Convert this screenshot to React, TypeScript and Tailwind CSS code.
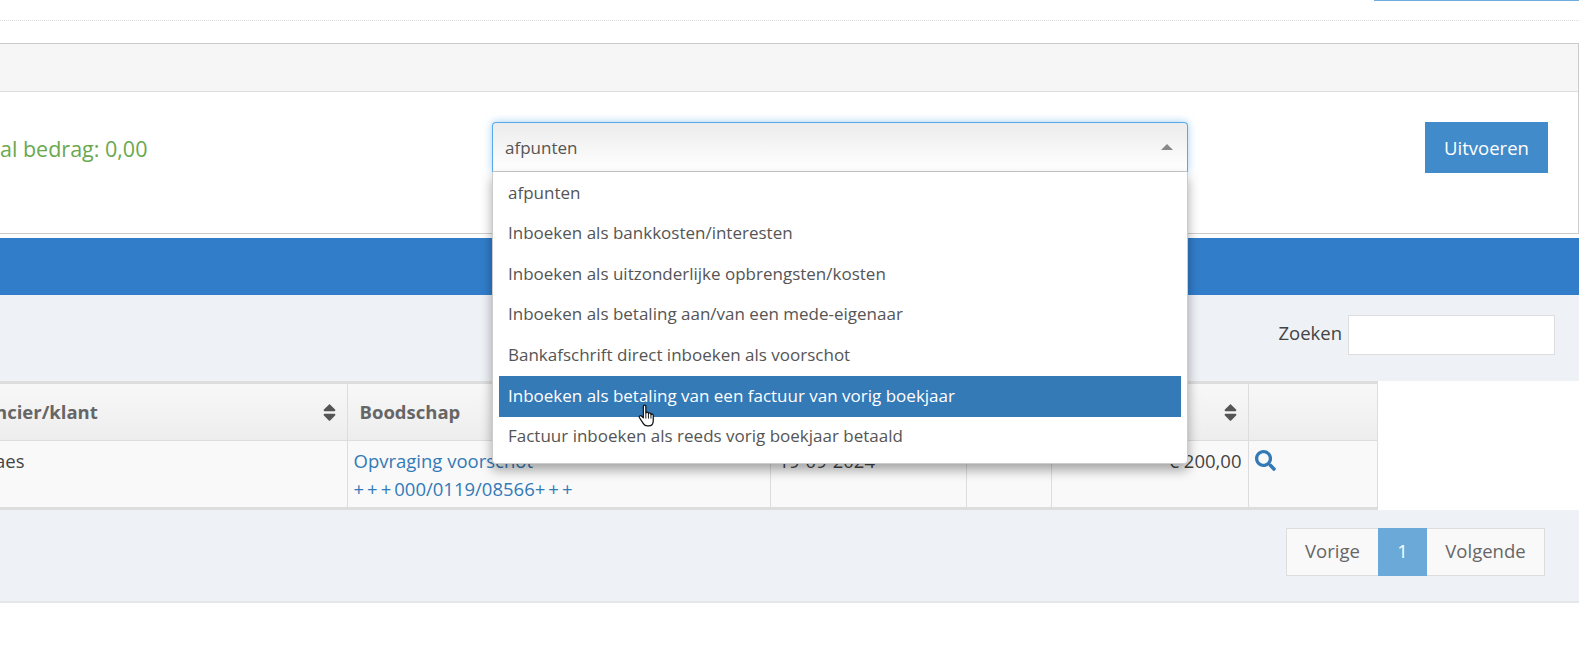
import React from 'react';
import { FaSort, FaSearch } from 'react-icons/fa';

// Dropdown options of the bank statement action select
const options = [
  'afpunten',
  'Inboeken als bankkosten/interesten',
  'Inboeken als uitzonderlijke opbrengsten/kosten',
  'Inboeken als betaling aan/van een mede-eigenaar',
  'Bankafschrift direct inboeken als voorschot',
  'Inboeken als betaling van een factuur van vorig boekjaar',
  'Factuur inboeken als reeds vorig boekjaar betaald',
];

function HandCursor() {
  return (
    <svg width="18" height="25" viewBox="0 0 17 24" className="absolute left-[139px] top-[28px]">
      <path
        d="M5 2.2c0-1.6 2.4-1.6 2.4 0v6.6c.2-1.4 2.4-1.4 2.5 0v.6c.2-1.3 2.3-1.3 2.4 0v.9c.3-1 2.2-.9 2.2.4v5.3c0 2.8-1.6 5-4.6 5H8.8c-1.8 0-2.9-.8-3.8-2.2L1.3 13.200c-.9-1.500 1-2.700 2.100-1.500L5 13.300V2.200z"
        fill="#fff"
        stroke="#111"
        strokeWidth="1.2"
        strokeLinejoin="round"
      />
      <path d="M7.400 9v5M9.900 9.500V14M12.300 10.300V14" stroke="#111" strokeWidth="0.9" fill="none" />
    </svg>
  );
}

function ActionSelect() {
  return (
    <div className="relative h-[50px] w-[696px]">
      <div className="flex h-[50px] items-center justify-between rounded-t-[4px] border border-[#5aa9e6] border-b-[#c8c8c8] bg-gradient-to-b from-[#ececec] to-[#ffffff] pl-[12px] pr-[14px] shadow-[0_0_8px_rgba(102,175,233,0.6)]">
        <span className="pt-[2px] text-[17px] text-[#555]">afpunten</span>
        <span className="h-0 w-0 border-x-[6px] border-b-[6px] border-x-transparent border-b-[#888]"></span>
      </div>
      <ul className="absolute left-0 top-[50px] z-20 w-[696px] rounded-b-[4px] border-x border-b border-[#ccc] bg-white px-[6px] pb-[6px] pt-px shadow-[0_6px_12px_rgba(0,0,0,0.35)]">
        {options.map((o, i) => (
          <li
            key={o}
            className={`relative flex h-[40.600px] items-center pb-[2px] pl-[9px] text-[17px] ${
              i === 5 ? 'bg-[#337ab7] text-white' : 'text-[#555]'
            }`}
          >
            {o}
            {i === 5 && <HandCursor />}
          </li>
        ))}
      </ul>
    </div>
  );
}

function SortHead({ label }: { label?: string }) {
  return (
    <div className="flex items-center justify-between pr-[7px]">
      <span>{label}</span>
      <FaSort className="text-[21px] text-[#555]" />
    </div>
  );
}

export default function App() {
  return (
    <div className="h-[650px] w-[1591px] overflow-hidden bg-white font-['Open_Sans',sans-serif] text-[18.500px] text-[#444]">
      <div className="w-[1579px]">
        {/* Top strip */}
        <div className="h-[21px] border-b border-dotted border-[#ddd]">
          <div className="ml-auto h-px w-[205px] bg-[#6cacde]"></div>
        </div>

        {/* Action panel */}
        <div className="mt-[22px] border border-l-0 border-[#ccc]">
          <div className="h-[48px] border-b border-[#ddd] bg-[#f6f6f6]"></div>
          <div className="flex h-[141px] items-start pt-[30px]">
            <div className="flex h-[54px] w-[492px] items-center text-[21.500px] text-[#6aa84f]">al bedrag: 0,00</div>
            <ActionSelect />
            <button className="ml-auto mr-[30px] h-[51px] w-[123px] bg-[#428bca] pt-[1px] text-[18.500px] text-white">Uitvoeren</button>
          </div>
        </div>

        {/* Blue title bar */}
        <div className="mt-[4px] h-[57px] bg-[#317dca]"></div>

        {/* Search row */}
        <div className="flex h-[86px] items-start justify-end gap-[6px] bg-[#eef1f6] pr-[24px] pt-[20px]">
          <label className="leading-[35px] text-[#444]">Zoeken</label>
          <input className="h-[40px] w-[207px] border border-[#ddd] bg-white" />
        </div>

        {/* Table */}
        <table className="w-[1377px] table-fixed border-collapse border-y-[3px] border-[#ddd]">
          <colgroup>
            <col className="w-[347px]" />
            <col className="w-[423px]" />
            <col className="w-[196px]" />
            <col className="w-[85px]" />
            <col className="w-[197px]" />
            <col className="w-[129px]" />
          </colgroup>
          <thead>
            <tr className="h-[58px] bg-gradient-to-b from-[#f8f8f8] to-[#ededed] text-left font-bold text-[#666]">
              <th className="border-r border-b border-[#ddd] pl-0">
                <div className="-ml-[5px]">
                  <SortHead label="ncier/klant" />
                </div>
              </th>
              <th className="border-x border-b border-[#ddd] pl-[12px]">Boodschap</th>
              <th className="border-x border-b border-[#ddd]"></th>
              <th className="border-x border-b border-[#ddd]"></th>
              <th className="border-x border-b border-[#ddd]">
                <SortHead />
              </th>
              <th className="border-x border-b border-[#ddd]"></th>
            </tr>
          </thead>
          <tbody>
            <tr className="h-[68px] bg-[#f9f9f9] align-top leading-[28px]">
              <td className="border-r border-[#ddd] pt-[6px]">
                <div className="-ml-[5px]">aes</div>
              </td>
              <td className="border-x border-[#ddd] pl-[6px] pt-[6px] text-[#337ab7]">
                Opvraging voorschot
                <br />
                <span className="tracking-[3px]">+++</span>000/0119/08566<span className="tracking-[3px]">+++</span>
              </td>
              <td className="border-x border-[#ddd] pl-[8px] pt-[6px]">19-09-2024</td>
              <td className="border-x border-[#ddd]"></td>
              <td className="border-x border-[#ddd] pr-[6px] pt-[6px] text-right">€ 200,00</td>
              <td className="border-x border-[#ddd] pl-[6px] pt-[9px] text-[#337ab7]">
                <FaSearch className="text-[21px]" />
              </td>
            </tr>
          </tbody>
        </table>

        {/* Pagination */}
        <div className="flex h-[93px] items-start justify-end border-b-2 border-[#e4e6ea] bg-[#eef1f6] pr-[34px] pt-[18px]">
          <div className="flex h-[48px] border border-[#ddd] bg-[#f9f9f9] text-[#666]">
            <span className="flex w-[91px] items-center justify-center pb-[2px]">Vorige</span>
            <span className="-my-px flex w-[49px] items-center justify-center bg-[#6baad8] pb-[2px] text-white">1</span>
            <span className="flex w-[117px] items-center justify-center pb-[2px]">Volgende</span>
          </div>
        </div>
      </div>
    </div>
  );
}
